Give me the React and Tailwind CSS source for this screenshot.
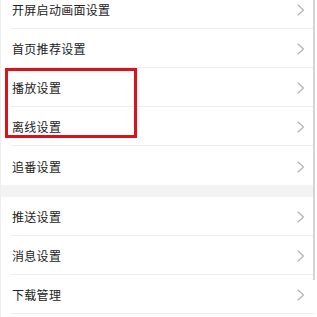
const groupA = ["开屏启动画面设置", "首页推荐设置", "播放设置", "离线设置", "追番设置"];
const groupB = ["推送设置", "消息设置", "下载管理"];

function Chevron() {
  return (
    <svg width="8" height="12" viewBox="0 0 8 12" fill="none" className="shrink-0">
      <polyline points="1,1 6.5,6 1,11" stroke="#b0b0b0" strokeWidth="1.1" strokeLinecap="round" strokeLinejoin="round" />
    </svg>
  );
}

function Row({ label, last }) {
  return (
    <div className="h-[39px] pl-[10px] bg-white">
      <div
        className={`h-full flex items-center justify-between pr-[9px] pt-[2px] ${
          last ? "" : "border-b border-[#ededed]"
        }`}
      >
        <span className="pl-px text-[12px] tracking-[0.3px] text-[#222222]">{label}</span>
        <Chevron />
      </div>
    </div>
  );
}

export default function App() {
  return (
    <div
      className="relative w-[317px] h-[317px] overflow-hidden bg-white border-l border-[#eeeeee]"
      style={{ fontFamily: '"Noto Sans CJK SC", "Noto Sans", sans-serif' }}
    >
      <div className="-mt-[10px] pr-[3px]">
        {groupA.map((l, i) => (
          <Row key={l} label={l} last={i === groupA.length - 1} />
        ))}
        <div className="h-[12px] bg-[#f3f3f3]" />
        {groupB.map((l) => (
          <Row key={l} label={l} />
        ))}
      </div>

      {/* scrollbar */}
      <div className="absolute top-0 right-[2px] w-[2px] h-[280px] bg-[#d4d4d4]" />

      {/* red annotation box */}
      <div className="absolute left-[4px] top-[68px] w-[132px] h-[70px] border-[3px] border-[#d9121b]" />
    </div>
  );
}
